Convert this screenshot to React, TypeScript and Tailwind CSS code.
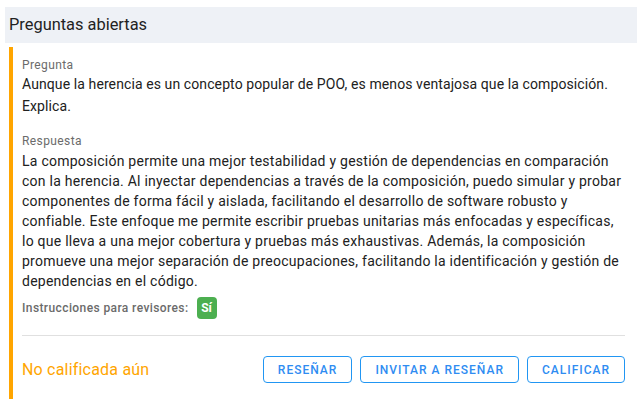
import React from 'react';

const font = { fontFamily: 'Roboto, "Liberation Sans", sans-serif' };

const OutlineButton: React.FC<{ label: string }> = ({ label }) => (
    <button className="h-[27px] px-[14px] rounded-[4px] border border-[#2196f3] text-[#2f8cf2] text-[12px] font-medium tracking-[1px] uppercase leading-none">
        {label}
    </button>
);

export default function App() {
    return (
        <div className="w-[642px] h-[400px] bg-white overflow-hidden text-[#212121]" style={font}>
            <div className="pt-[7px] px-[5px]">
                {/* Section header */}
                <div className="h-[36px] bg-[#eef1f6] flex items-center pl-[4px] text-[16.4px] text-[#222]">
                    Preguntas abiertas
                </div>

                {/* Question card */}
                <div className="mt-[4px] ml-[4px] mr-[12px] border-l-[4px] border-[#ffa500] pl-[9px] pt-[10px]">
                    <div className="text-[12px] text-[#6b6b6b] leading-[16px] tracking-[0.4px]">Pregunta</div>
                    <p className="text-[14px] leading-[22px] tracking-[0.1px]">
                        Aunque la herencia es un concepto popular de POO, es menos ventajosa que la composición. Explica.
                    </p>

                    <div className="text-[12px] text-[#6b6b6b] leading-[16px] tracking-[0.4px] mt-[16px]">Respuesta</div>
                    <p className="text-[14px] leading-[20px] tracking-[0.25px] mt-[2px]">
                        La composición permite una mejor testabilidad y gestión de dependencias en comparación con la herencia. Al inyectar dependencias a través de la composición, puedo simular y probar componentes de forma fácil y aislada, facilitando el desarrollo de software robusto y confiable. Este enfoque me permite escribir pruebas unitarias más enfocadas y específicas, lo que lleva a una mejor cobertura y pruebas más exhaustivas. Además, la composición promueve una mejor separación de preocupaciones, facilitando la identificación y gestión de dependencias en el código.
                    </p>

                    <div className="flex items-center gap-[8px] mt-[6px]">
                        <span className="text-[12px] font-medium text-[#6b6b6b] tracking-[0.4px]">Instrucciones para revisores:</span>
                        <span className="h-[22px] w-[20px] justify-center rounded-[4px] bg-[#4caf50] text-white text-[12px] font-bold flex items-center">
                            Sí
                        </span>
                    </div>

                    <div className="h-px bg-[#e0e0e0] mt-[16px]" />

                    <div className="flex items-center justify-between pt-[20px] pb-[16px]">
                        <span className="text-[16px] text-[#ffa500] tracking-[0.2px]">No calificada aún</span>
                        <div className="flex items-center gap-[8px]">
                            <OutlineButton label="Reseñar" />
                            <OutlineButton label="Invitar a reseñar" />
                            <OutlineButton label="Calificar" />
                        </div>
                    </div>
                </div>
            </div>
        </div>
    );
}
